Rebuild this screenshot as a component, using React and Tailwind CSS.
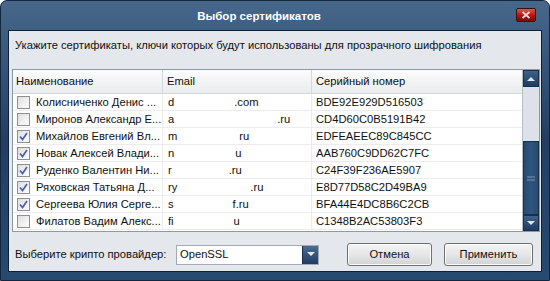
import React from "react";

const rows = [
  { name: "Колисниченко Денис ...", l: "d", r: ".com", rx: 71, serial: "BDE92E929D516503", c: false },
  { name: "Миронов Александр Е...", l: "a", r: ".ru", rx: 114, serial: "CD4D60C0B5191B42", c: false },
  { name: "Михайлов Евгений Вл...", l: "m", r: "ru", rx: 73, serial: "EDFEAEEC89C845CC", c: true },
  { name: "Новак Алексей Влади...", l: "n", r: "u", rx: 72, serial: "AAB760C9DD62C7FC", c: true },
  { name: "Руденко Валентин Ни...", l: "r", r: ".ru", rx: 68, serial: "C24F39F236AE5907", c: true },
  { name: "Ряховская Татьяна Д...", l: "ry", r: ".ru", rx: 86, serial: "E8D77D58C2D49BA9", c: true },
  { name: "Сергеева Юлия Серге...", l: "s", r: "f.ru", rx: 70, serial: "BFA44E4DC8B6C2CB", c: true },
  { name: "Филатов Вадим Алекс...", l: "fi", r: "u", rx: 73, serial: "C1348B2AC53803F3", c: false },
];

function Check({ on }) {
  return (
    <div className="w-[13px] h-[13px] shrink-0 border border-[#8e8f8f] bg-gradient-to-br from-[#dcdcdc] to-[#ffffff] flex items-center justify-center">
      <div className="w-[9px] h-[9px] bg-gradient-to-br from-[#e2e2e2] to-[#fbfbfb] flex items-center justify-center">
        {on && (
          <svg width="9" height="9" viewBox="0 0 9 9">
            <path d="M1 4.5 L3.5 7.5 L8 1" fill="none" stroke="#4a60ac" strokeWidth="1.7" />
          </svg>
        )}
      </div>
    </div>
  );
}

export default function App() {
  return (
    <div className="w-[550px] h-[281px] bg-white overflow-hidden" style={{ fontFamily: '"Liberation Sans", Arial, sans-serif' }}>
      <div className="w-[550px] h-[281px] rounded-t-[7px] bg-gradient-to-b from-[#47688b] via-[#223f61] to-[#274a70] border border-[#14263c] flex flex-col">
        {/* title bar */}
        <div className="h-[29px] relative flex items-center justify-center shrink-0">
          <div className="text-white font-bold text-[11.5px] ml-[-32px] mt-[3px]">Выбор сертификатов</div>
          <div className="absolute right-[13px] top-[7px] w-[20px] h-[14px] rounded-[2px] border border-[#3a1010] bg-gradient-to-b from-[#d8584c] via-[#b01810] to-[#7a0a06] flex items-center justify-center">
            <svg width="10" height="8" viewBox="0 0 10 8">
              <path d="M1.5 1 L8.5 7 M8.5 1 L1.5 7" stroke="#f0d8d8" strokeWidth="1.8" />
            </svg>
          </div>
        </div>
        {/* content */}
        <div className="mx-[7px] mb-[8px] flex-1 border border-[#0f2036] bg-[#e4e7eb] flex flex-col">
          <div className="text-[11.2px] text-[#101010] pl-[6px] pt-[7px] h-[38px] leading-[14px]">
            Укажите сертификаты, ключи которых будут использованы для прозрачного шифрования
          </div>
          {/* table */}
          <div className="ml-[3px] w-[528px] h-[163px] border border-[#8d98a4] bg-white flex text-[11.2px] text-[#101010]">
            <div className="flex-1 flex flex-col">
              <div className="h-[24px] flex bg-gradient-to-b from-[#fcfcfc] to-[#e9ebee] border-b border-[#d5d9de]">
                <div className="w-[150px] border-r border-[#d5d9de] flex items-center pl-[3px]">Наименование</div>
                <div className="w-[149px] border-r border-[#d5d9de] flex items-center pl-[4px]">Email</div>
                <div className="flex-1 flex items-center pl-[4px]">Серийный номер</div>
              </div>
              {rows.map((r, i) => (
                <div key={i} className="h-[17px] flex border-b border-[#ececec]">
                  <div className="w-[150px] border-r border-[#ececec] flex items-center pl-[4px] gap-[6px]">
                    <Check on={r.c} />
                    <span className="whitespace-nowrap">{r.name}</span>
                  </div>
                  <div className="w-[149px] border-r border-[#ececec] flex items-center pl-[5px]">
                    <span className="whitespace-nowrap">{r.l}</span>
                    <span className="whitespace-nowrap" style={{ marginLeft: r.rx - 5 - (r.l.length > 1 ? 8 : 6) }}>{r.r}</span>
                  </div>
                  <div className="flex-1 flex items-center pl-[4px]">{r.serial}</div>
                </div>
              ))}
            </div>
            {/* scrollbar */}
            <div className="w-[17px] flex flex-col bg-[#dde2e8] border-l border-[#b5bec8]">
              <div className="h-[17px] bg-gradient-to-b from-[#3f6288] to-[#1e3c60] border border-[#16304e] flex items-center justify-center">
                <svg width="8" height="5" viewBox="0 0 8 5"><path d="M0 5 L4 1 L8 5 Z" fill="#dfe6ee" /></svg>
              </div>
              <div className="h-[54px]" />
              <div className="flex-1 bg-gradient-to-r from-[#284a70] via-[#2f5580] to-[#284a70] border border-[#16304e] flex items-center justify-center">
                <svg width="8" height="5" viewBox="0 0 8 5"><path d="M0 1 H8 M0 4 H8" stroke="#7a93b0" strokeWidth="1" /></svg>
              </div>
              <div className="h-[16px] bg-gradient-to-b from-[#3f6288] to-[#1e3c60] border border-[#16304e] flex items-center justify-center">
                <svg width="8" height="5" viewBox="0 0 8 5"><path d="M0 0 L4 4 L8 0 Z" fill="#dfe6ee" /></svg>
              </div>
            </div>
          </div>
          {/* bottom */}
          <div className="flex items-center pl-[6px] pt-[11px]">
            <div className="text-[11.2px] text-[#101010] w-[161px]">Выберите крипто провайдер:</div>
            <div className="w-[143px] h-[20px] bg-white border border-[#a3aab3] flex items-center">
              <span className="flex-1 pl-[3px] text-[11.2px] text-[#101010]">OpenSSL</span>
              <div className="w-[16px] h-[18px] bg-gradient-to-b from-[#4a6d94] to-[#1f3d62] border-l border-[#16304e] flex items-center justify-center">
                <svg width="8" height="5" viewBox="0 0 8 5"><path d="M0 0 L4 4 L8 0 Z" fill="#e4eaf0" /></svg>
              </div>
            </div>
            <div className="ml-[28px] w-[85px] h-[23px] rounded-[3px] border border-[#707070] bg-gradient-to-b from-[#f4f4f4] via-[#e6e6e6] to-[#d0d3d6] flex items-center justify-center text-[11.2px] text-[#101010] shadow-[inset_0_0_0_1px_#fcfcfc]">Отмена</div>
            <div className="ml-[12px] w-[89px] h-[23px] rounded-[3px] border border-[#707070] bg-gradient-to-b from-[#f4f4f4] via-[#e6e6e6] to-[#d0d3d6] flex items-center justify-center text-[11.2px] text-[#101010] shadow-[inset_0_0_0_1px_#fcfcfc]">Применить</div>
          </div>
        </div>
      </div>
    </div>
  );
}
